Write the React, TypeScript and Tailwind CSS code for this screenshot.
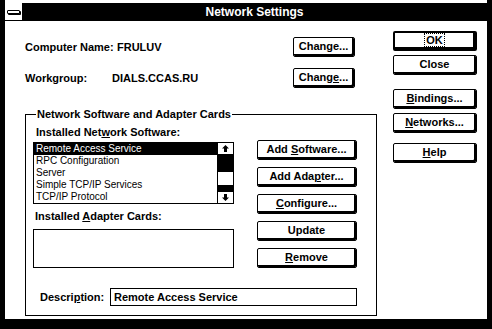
import React from "react";

function Btn({
  children,
  className = "",
  isDefault = false,
}: {
  children: React.ReactNode;
  className?: string;
  isDefault?: boolean;
}) {
  return (
    <div
      className={`flex items-center justify-center h-[20px] bg-white ${
        isDefault ? "border-2" : "border"
      } border-black rounded-[2px] shadow-[inset_-2px_-2px_0_0_#000] pr-[1px] pb-[1px] text-[11px] font-bold leading-none text-black whitespace-nowrap ${className}`}
    >
      <span>{children}</span>
    </div>
  );
}

function U({ children }: { children: React.ReactNode }) {
  return <span className="underline decoration-1 underline-offset-[1px]">{children}</span>;
}

function Arrow({ down = false }: { down?: boolean }) {
  return (
    <svg width="7" height="7" viewBox="0 0 7 7" className={down ? "rotate-180" : ""}>
      <path d="M3.5 0 L7 3.5 H5 V7 H2 V3.5 H0 Z" fill="#000" />
    </svg>
  );
}

const software = [
  "Remote Access Service",
  "RPC Configuration",
  "Server",
  "Simple TCP/IP Services",
  "TCP/IP Protocol",
];

export default function App() {
  return (
    <div className="w-[492px] h-[329px] bg-black px-[5px] pb-[10px] font-['Liberation_Sans',Arial,sans-serif] text-black">
      <div className="h-full bg-white flex flex-col">
        <div className="h-[3px]" />
        {/* Title bar */}
        <div className="flex h-[18px]">
          <div className="w-[17px] h-full flex items-center justify-center bg-white border-b border-black">
            <div className="w-[13px] h-[4px] border border-black rounded-[1px] bg-white shadow-[1px_1px_0_#000]" />
          </div>
          <div className="flex-1 bg-black text-white flex items-center justify-center text-[12px] font-bold">
            Network Settings
          </div>
        </div>

        {/* Body */}
        <div className="flex-1 flex items-start pl-[20px] pr-[10px]">
          {/* Left column */}
          <div className="w-[352px] pt-[16px]">
            <div className="flex items-center h-[20px] w-[330px] text-[11px] font-bold">
              <span className="w-[92px]">Computer Name:</span>
              <span>FRULUV</span>
              <Btn className="ml-auto w-[62px]">
                Chan<U>g</U>e...
              </Btn>
            </div>
            <div className="flex items-center h-[20px] w-[330px] mt-[11px] text-[11px] font-bold">
              <span className="w-[87px]">Workgroup:</span>
              <span>DIALS.CCAS.RU</span>
              <Btn className="ml-auto w-[62px]">
                Chang<U>e</U>...
              </Btn>
            </div>

            <fieldset className="mt-[20px] border border-black pl-[7px] pb-[9px]">
              <legend className="ml-[3px] px-[1px] text-[11px] font-bold leading-[13px]">
                Network Software and Adapter Cards
              </legend>
              <div className="flex">
                <div className="w-[201px]">
                  <div className="mt-[5px] pl-[3px] text-[11px] font-bold leading-[13px]">
                    Installed Net<U>w</U>ork Software:
                  </div>
                  <div className="mt-[3px] h-[62px] border border-black flex">
                    <div className="flex-1">
                      {software.map((s, i) => (
                        <div
                          key={s}
                          className={`h-[12px] leading-[12px] text-[10px] pl-[2px] whitespace-nowrap ${
                            i === 0 ? "bg-black text-white" : ""
                          }`}
                        >
                          {s}
                        </div>
                      ))}
                    </div>
                    <div className="w-[16px] border-l border-black flex flex-col">
                      <div className="h-[12px] border-b border-black flex items-center justify-center">
                        <Arrow />
                      </div>
                      <div className="flex-1 bg-black">
                        <div className="mt-[17px] h-[13px] bg-white" />
                      </div>
                      <div className="h-[12px] border-t border-black flex items-center justify-center">
                        <Arrow down />
                      </div>
                    </div>
                  </div>
                  <div className="mt-[6px] pl-[2px] text-[11px] font-bold leading-[13px]">
                    Installed <U>A</U>dapter Cards:
                  </div>
                  <div className="mt-[6px] h-[39px] border border-black" />
                </div>

                <div className="ml-[23px] w-[100px] pt-[19px] flex flex-col gap-[7px]">
                  <Btn>
                    Add <U>S</U>oftware...
                  </Btn>
                  <Btn>
                    Add Ada<U>p</U>ter...
                  </Btn>
                  <Btn>
                    <U>C</U>onfigure...
                  </Btn>
                  <Btn>Update</Btn>
                  <Btn>
                    <U>R</U>emove
                  </Btn>
                </div>
              </div>

              <div className="mt-[20px] flex items-center text-[11px] font-bold">
                <span className="ml-[7px] w-[70px]">
                  Descri<U>p</U>tion:
                </span>
                <div className="w-[247px] h-[18px] border border-black pl-[3px] flex items-center">
                  Remote Access Service
                </div>
              </div>
            </fieldset>
          </div>

          {/* Right column */}
          <div className="ml-[16px] w-[84px] pt-[10px] flex flex-col">
            <Btn isDefault>
              <span className="border border-dotted border-black px-[1px] leading-[11px]">OK</span>
            </Btn>
            <Btn className="mt-[4px]">Close</Btn>
            <Btn className="mt-[14px]">
              <U>B</U>indings...
            </Btn>
            <Btn className="mt-[4px]">
              <U>N</U>etworks...
            </Btn>
            <Btn className="mt-[10px]">
              <U>H</U>elp
            </Btn>
          </div>
        </div>
      </div>
    </div>
  );
}
